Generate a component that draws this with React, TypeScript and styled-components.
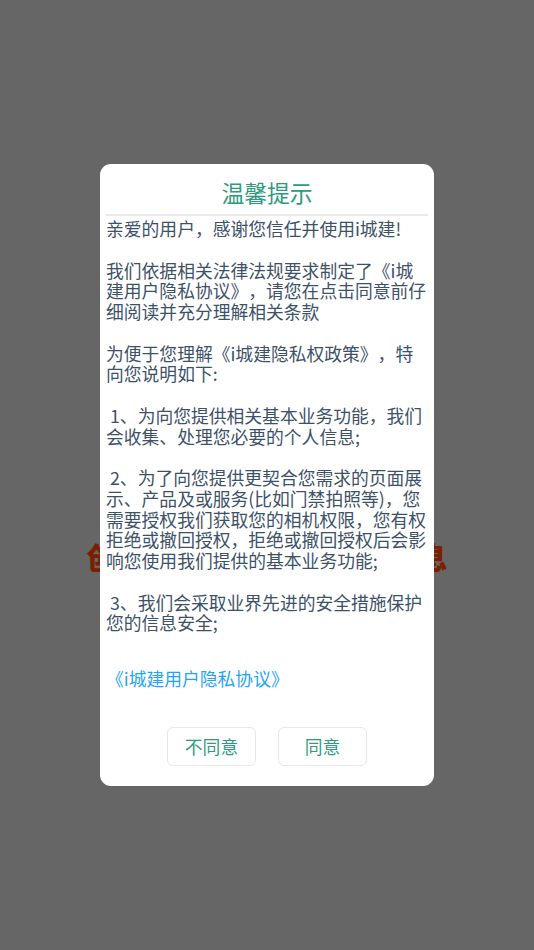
import React from 'react'
import styled, { createGlobalStyle } from 'styled-components'

const GlobalStyle = createGlobalStyle`
  html, body {
    margin: 0;
    padding: 0;
    background: #666;
  }
  body {
    font-family: 'Noto Sans CJK SC', 'Noto Sans', sans-serif;
    text-spacing-trim: space-all;
  }
`

const Page = styled.div`
  position: relative;
  width: 534px;
  height: 950px;
  overflow: hidden;
  background: #666;
  display: flex;
  align-items: center;
  justify-content: center;
`

const BehindTitle = styled.div`
  margin-top: 162px;
  font-size: 30px;
  font-weight: 900;
  line-height: 36px;
  letter-spacing: 0.1px;
  white-space: nowrap;
  color: #7a2000;
`

const Overlay = styled.div`
  position: absolute;
  inset: 0;
  display: flex;
  align-items: flex-start;
  justify-content: center;
  padding-top: 164px;
  box-sizing: border-box;
`

const Modal = styled.div`
  width: 334px;
  height: 622px;
  box-sizing: border-box;
  padding: 0 6px;
  background: #fff;
  border-radius: 11px;
  display: flex;
  flex-direction: column;
`

const Title = styled.div`
  height: 52px;
  box-sizing: border-box;
  border-bottom: 2px solid #e9e9e9;
  font-size: 22.8px;
  line-height: 58px;
  text-align: center;
  color: #2e9b7e;
`

const Body = styled.div`
  padding-top: 2px;
  font-size: 17.8px;
  line-height: 20.75px;
  color: #3d5269;
`

const Paragraph = styled.p`
  margin: 0 0 20.75px;
  white-space: pre-wrap;
`

const PolicyLink = styled.a`
  display: block;
  margin-top: 13px;
  font-size: 17.8px;
  line-height: 22px;
  color: #1fa5f5;
  text-decoration: none;
`

const Actions = styled.div`
  margin-top: auto;
  margin-bottom: 20px;
  display: flex;
  justify-content: center;
  gap: 22px;
`

const ActionButton = styled.button`
  width: 89px;
  height: 39px;
  padding: 0 0 2px;
  border: 1px solid #e8e8e8;
  border-radius: 6px;
  background: #fff;
  font-family: inherit;
  font-size: 17.8px;
  color: #2e9b7e;
`

const paragraphs = [
  '亲爱的用户，感谢您信任并使用i城建!',
  '我们依据相关法律法规要求制定了《i城建用户隐私协议》，请您在点击同意前仔细阅读并充分理解相关条款',
  '为便于您理解《i城建隐私权政策》，特向您说明如下:',
  ' 1、为向您提供相关基本业务功能，我们会收集、处理您必要的个人信息;',
  ' 2、为了向您提供更契合您需求的页面展示、产品及或服务(比如门禁拍照等)，您需要授权我们获取您的相机权限，您有权拒绝或撤回授权，拒绝或撤回授权后会影响您使用我们提供的基本业务功能;',
  ' 3、我们会采取业界先进的安全措施保护您的信息安全;',
]

const App: React.FunctionComponent = () => {
  return <Page>
    <GlobalStyle/>
    <BehindTitle>创建您的个人基本身份信息</BehindTitle>
    <Overlay>
      <Modal>
        <Title>温馨提示</Title>
        <Body>
          {paragraphs.map((text) => <Paragraph key={text}>{text}</Paragraph>)}
        </Body>
        <PolicyLink href="#">《i城建用户隐私协议》</PolicyLink>
        <Actions>
          <ActionButton>不同意</ActionButton>
          <ActionButton>同意</ActionButton>
        </Actions>
      </Modal>
    </Overlay>
  </Page>
}

export default App
